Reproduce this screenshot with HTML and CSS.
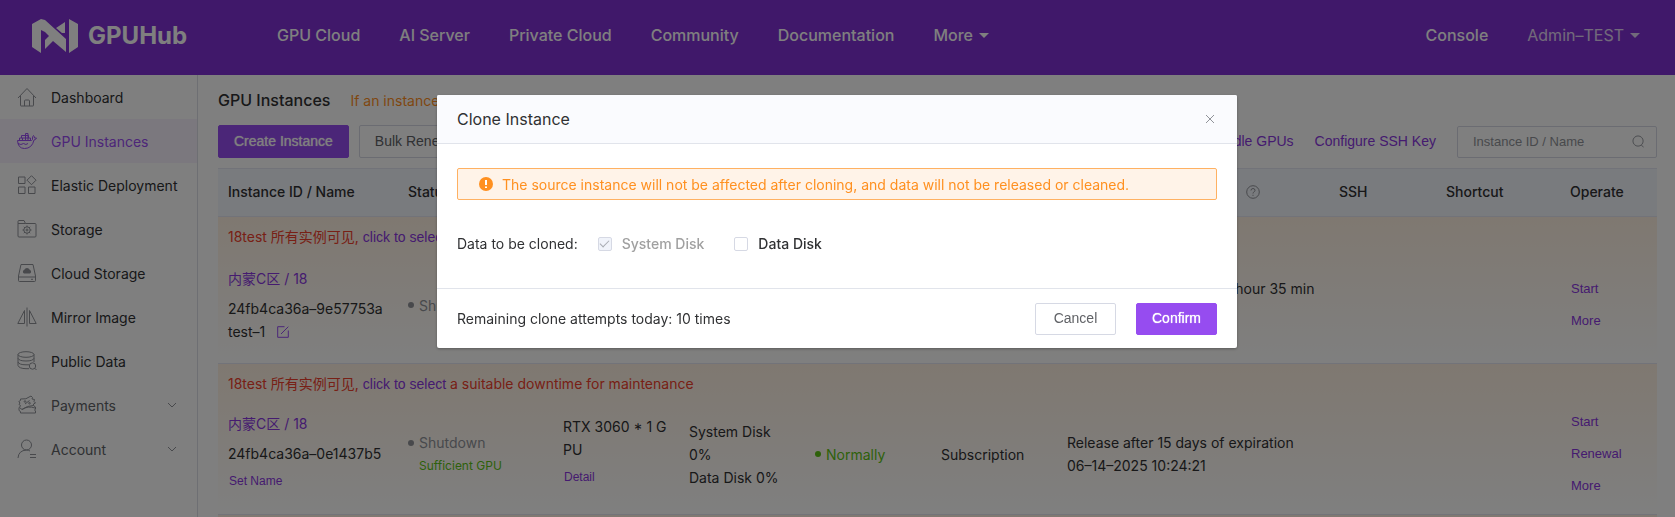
FILE: index.html
```html
<!DOCTYPE html>
<html lang="en">
<head>
<meta charset="utf-8">
<title>GPUHub - GPU Instances</title>
<link rel="stylesheet" href="styles.css">
</head>
<body>
<header class="topbar">
  <a class="logo" href="#">
    <svg class="logo-mark" viewBox="0 0 46 34" aria-hidden="true"><path d="M0 5 9 0 13 1 34 20V33L21 22 13 30V21L17 17 13 13 9 11V34L0 28ZM33 3V14L30 14 24 9ZM37 0 46 5V28L37 34Z"/></svg>
    <span>GPUHub</span>
  </a>
  <nav class="nav">
    <a href="#">GPU Cloud</a>
    <a href="#">AI Server</a>
    <a href="#">Private Cloud</a>
    <a href="#">Community</a>
    <a href="#">Documentation</a>
    <a href="#">More<i class="caret"></i></a>
  </nav>
  <div class="user">
    <a href="#">Console</a>
    <a class="account" href="#">Admin–TEST<i class="caret"></i></a>
  </div>
</header>

<div class="page">
  <aside class="sidebar">
    <a class="side-item" href="#">
      <svg class="side-icon" viewBox="0 0 20 20"><path d="M1 11 10 1.500 19 11M3.500 9V18.500Q3.500 19 4 19H16Q16.500 19 16.500 18.500V9M7.500 19V14Q7.500 13 8.500 13H11.500Q12.500 13 12.500 14V19"/></svg>
      <span>Dashboard</span></a>
    <a class="side-item active" href="#">
      <svg class="side-icon" viewBox="0 0 20 20"><path d="M.5 9.500H14.500Q16 9 15.500 7 15.500 5.500 16.500 4.500 17.500 5.500 17.500 7H19.500Q19 8.700 17 9 15 17.500 7.500 17.500 1 17.500 .5 9.500ZM2.500 9.500V7H13.500V9.500M4.500 7V4.500H11.500V7M8.500 4.500V2.500H11V7M5.500 7V9.500M8.500 4.500V9.500M11 7V9.500M1 12.500Q4 14.500 6.500 12.500 9 14.500 11 12.500"/></svg>
      <span>GPU Instances</span></a>
    <a class="side-item" href="#">
      <svg class="side-icon" viewBox="0 0 20 20"><path d="M1.500 2H8V8.500H1.500ZM1.500 12H8V18.500H1.500ZM11.500 12H18V18.500H11.500ZM14.500 .7 19 5.200 14.500 9.700 10 5.200Z"/></svg>
      <span>Elastic Deployment</span></a>
    <a class="side-item" href="#">
      <svg class="side-icon" viewBox="0 0 20 20"><path d="M1 4.500V2.500Q1 1.500 2 1.500H7L8.500 4.500H18Q19 4.500 19 5.500V17Q19 18 18 18H2Q1 18 1 17V4.500H8.500"/><circle cx="10" cy="11" r="3.200"/><circle cx="10" cy="11" r="1"/><path d="M10 6.500V8M10 14V15.500M5.500 11H7M13 11H14.500M6.800 7.800 7.900 8.900M12.100 13.100 13.200 14.200M6.800 14.200 7.900 13.100M12.100 8.900 13.200 7.800"/></svg>
      <span>Storage</span></a>
    <a class="side-item" href="#">
      <svg class="side-icon" viewBox="0 0 20 20"><path d="M4 1.500H16L18.500 13V17.500Q18.500 18.500 17.500 18.500H2.500Q1.500 18.500 1.500 17.500V13ZM1.500 14H18.500M14 16.300H16"/><path class="fill" d="M7 10.500A2 2 0 0 1 7.300 6.800 3 3 0 0 1 12.700 6.800 2 2 0 0 1 13 10.500Z"/></svg>
      <span>Cloud Storage</span></a>
    <a class="side-item" href="#">
      <svg class="side-icon" viewBox="0 0 20 20"><path d="M10 .5V19.500M7.500 3.500V16.500H.8ZM12.500 3.500V16.500H19.200Z"/></svg>
      <span>Mirror Image</span></a>
    <a class="side-item" href="#">
      <svg class="side-icon" viewBox="0 0 20 20"><ellipse cx="9" cy="3.500" rx="8" ry="2.800"/><path d="M1 3.500V14.500Q2 17.500 9 17.700H12M17 3.500V11M1 7.300Q2 10 9 10 16 10 17 7.300M1 11Q2 13.800 9 13.800H12"/><circle cx="15.500" cy="15" r="3.200"/><path d="M17.800 17.300 19.500 19"/></svg>
      <span>Public Data</span></a>
    <a class="side-item group" href="#">
      <svg class="side-icon" viewBox="0 0 20 20"><path d="M3.500 10.500 2 9.500 3 8 1.800 6.500 3.500 5.500 3.500 4Q9 5 14 1L15.500 2.500 15 4 17.500 4.500 17 6.500 18.500 8 16.500 9V10.500Q10 10.500 5 14.500L2.500 12.500ZM16.500 10.500 18.500 12V14L17.500 15 18.500 16V18H3.500V16.500L2 15.500V12.500M5 14.500Q11 10.500 18 13M8 9 12.500 5.500"/><circle cx="8" cy="6.500" r=".8"/><circle cx="12.500" cy="8.200" r=".8"/></svg>
      <span>Payments</span>
      <svg class="chev" viewBox="0 0 10 6"><path d="M1 1 5 5 9 1"/></svg></a>
    <a class="side-item group" href="#">
      <svg class="side-icon" viewBox="0 0 20 20"><circle cx="9.500" cy="6" r="5"/><path d="M1 19Q1.500 11.500 9.500 11Q11.500 11 13 12M13 15.500H19M13 18.500H19"/></svg>
      <span>Account</span>
      <svg class="chev" viewBox="0 0 10 6"><path d="M1 1 5 5 9 1"/></svg></a>
  </aside>

  <main class="main">
    <div class="heading">
      <h1>GPU Instances</h1>
      <p>If an instance is shut down</p>
    </div>
    <div class="toolbar">
      <button class="btn primary">Create Instance</button>
      <button class="btn">Bulk Renewal</button>
      <div class="tools">
        <a href="#">Subscribe Idle GPUs</a>
        <a href="#">Configure SSH Key</a>
        <label class="search">
          <input type="text" placeholder="Instance ID / Name" aria-label="Instance ID / Name">
          <svg viewBox="0 0 14 14"><circle cx="6.500" cy="6.500" r="5.500"/><path d="M10 11 12.500 13"/></svg>
        </label>
      </div>
    </div>

    <table class="grid">
      <colgroup>
        <col class="c-id"><col class="c-status"><col class="c-std"><col class="c-std"><col class="c-std"><col class="c-std"><col><col class="c-ssh"><col class="c-cut"><col class="c-op">
      </colgroup>
      <thead>
        <tr><th>Instance ID / Name</th><th>Status</th><th>Specification</th><th>Local Disk</th><th>Health</th><th>Billing</th><th><span class="with-help">Release Time / Stop Time <svg class="help" viewBox="0 0 14 14"><circle cx="7" cy="7" r="6.300"/><path d="M5 5.500Q5 3.500 7 3.500T9 5.400Q9 6.300 8 6.900 7 7.500 7 8.500M7 9.800V10.900"/></svg></span></th><th>SSH</th><th>Shortcut</th><th>Operate</th></tr>
      </thead>
      <tbody>
        <tr class="notice"><td colspan="10">18test 所有实例可见, <a href="#">click to select</a> a suitable downtime for maintenance</td></tr>
        <tr>
          <td><div class="region">内蒙C区 / 18</div><div>24fb4ca36a–9e57753a</div><div class="named">test–1 <svg class="edit" viewBox="0 0 12 12"><path d="M7.500 .7H.7V11.300H11.300V4.500M4 8 11.300 .7"/></svg></div></td>
          <td><div class="state off">Shutdown</div></td>
          <td><div>RTX 3060 * 1 GPU</div><a class="mini" href="#">Detail</a></td>
          <td><div>System Disk 0%</div><div>Data Disk<br>0%</div></td>
          <td><div class="state ok">Normally</div></td>
          <td>Pay as you go</td>
          <td class="upper"><div>Release after 20 days 23 hour 35 min</div><div>if shut down</div></td>
          <td></td><td></td>
          <td><a class="mini op" href="#">Start</a><a class="mini op" href="#">More</a></td>
        </tr>
      </tbody>
      <tbody>
        <tr class="notice"><td colspan="10">18test 所有实例可见, <a href="#">click to select</a> a suitable downtime for maintenance</td></tr>
        <tr>
          <td><div class="region">内蒙C区 / 18</div><div>24fb4ca36a–0e1437b5</div><a class="mini" href="#">Set Name</a></td>
          <td><div class="state off">Shutdown</div><div class="stock">Sufficient GPU</div></td>
          <td><div class="spec">RTX 3060 * 1 GPU</div><a class="mini" href="#">Detail</a></td>
          <td><div>System Disk 0%</div><div>Data Disk 0%</div></td>
          <td><div class="state ok">Normally</div></td>
          <td>Subscription</td>
          <td><div>Release after 15 days of expiration</div><div>06–14–2025 10:24:21</div></td>
          <td></td><td></td>
          <td><a class="mini op" href="#">Start</a><a class="mini op" href="#">Renewal</a><a class="mini op" href="#">More</a></td>
        </tr>
      </tbody>
      <tbody>
        <tr class="notice"><td colspan="10"></td></tr>
      </tbody>
    </table>
  </main>
</div>

<div class="overlay">
  <section class="dialog" role="dialog" aria-labelledby="dlg-title">
    <header class="dialog-head">
      <h2 id="dlg-title">Clone Instance</h2>
      <button class="close" aria-label="Close"><svg viewBox="0 0 10 10"><path d="M1 1 9 9M9 1 1 9"/></svg></button>
    </header>
    <div class="dialog-body">
      <div class="alert">
        <svg viewBox="0 0 14 14"><circle cx="7" cy="7" r="7"/><path d="M7 3V8M7 9.500V11"/></svg>
        <span>The source instance will not be affected after cloning, and data will not be released or cleaned.</span>
      </div>
      <div class="form-row">
        <span class="form-label">Data to be cloned:</span>
        <label class="check disabled"><input type="checkbox" checked disabled>System Disk</label>
        <label class="check"><input type="checkbox">Data Disk</label>
      </div>
    </div>
    <footer class="dialog-foot">
      <span>Remaining clone attempts today: 10 times</span>
      <div class="actions">
        <button class="btn">Cancel</button>
        <button class="btn primary">Confirm</button>
      </div>
    </footer>
  </section>
</div>
</body>
</html>
```
FILE: styles.css
```css
* { box-sizing: border-box; }
html, body { height: 100%; }
body {
  margin: 0;
  overflow: hidden;
  display: flex;
  flex-direction: column;
  background: #fff;
  color: #303133;
  font: 14px/23px Inter, "Noto Sans CJK SC", sans-serif;
}
a { color: #8a36e0; text-decoration: none; }
svg { fill: none; stroke: currentColor; flex: none; }
button, input { font: inherit; }

.topbar {
  flex: none;
  height: 75px;
  padding: 0 35px 4px 32px;
  display: flex;
  align-items: center;
  background: #8031d4;
}
.topbar a { color: #fff; font-size: 16px; font-weight: 500; }
.topbar .logo { width: 245px; display: flex; align-items: center; gap: 10px; font-size: 24px; font-weight: 700; }
.logo-mark { width: 46px; height: 34px; fill: #fff; stroke: none; }
.nav { display: flex; gap: 39px; }
.nav a, .user a { display: flex; align-items: center; gap: 6px; white-space: nowrap; }
.user { margin-left: auto; display: flex; gap: 39px; }
.topbar .account { font-weight: 400; opacity: .8; }
.caret { border: 5px solid transparent; border-top-color: currentColor; border-bottom: 0; }

.page { flex: 1; min-height: 0; display: flex; overflow: hidden; }
.sidebar { flex: none; width: 198px; border-right: 1px solid #dcdfe6; }
.side-item { height: 44px; padding: 0 20px 0 17px; display: flex; align-items: center; gap: 14px; color: #303133; white-space: nowrap; }
.side-item.active { color: #9a4df2; background: #f7f1fd; }
.side-item.group { color: #606266; }
.side-icon { width: 20px; height: 20px; color: #909399; }
.active .side-icon { color: inherit; }
.side-icon .fill { fill: currentColor; stroke: none; }
.chev { width: 10px; height: 6px; margin-left: auto; color: #909399; }

.main { flex: 1; min-width: 0; padding: 13px 18px 0 20px; }
.heading { display: flex; align-items: center; gap: 20px; height: 24px; }
.heading h1 { margin: 0; font-size: 16px; font-weight: 500; }
.heading p { margin: 0; color: #ff8f1f; }
.toolbar { display: flex; align-items: center; gap: 10px; margin-top: 13px; }
.btn, .tools, .mini, .notice a { font-family: "Liberation Sans", Arial, sans-serif; }
.btn {
  height: 33px;
  padding: 0 15px;
  border: 1px solid #d6d9e4;
  border-radius: 2px;
  background: #fff;
  color: #606266;
}
.btn.primary { border-color: #964cf0; background: #964cf0; color: #fff; text-shadow: 0 0 1px #fff; }
.tools { margin-left: auto; display: flex; align-items: center; gap: 21px; }
.search { width: 200px; height: 32px; padding: 0 11px 0 15px; display: flex; align-items: center; border: 1px solid #d6d9e4; border-radius: 2px; }
.search input { flex: 1; min-width: 0; padding: 0; border: 0; outline: 0; background: none; font-size: 13px; }
.search input::placeholder { color: #909399; }
.search svg { width: 13px; height: 13px; color: #909399; }

.grid { width: 100%; margin-top: 10px; table-layout: fixed; border-collapse: separate; border-spacing: 0; }
.c-id { width: 180px; }
.c-status { width: 155px; }
.c-std { width: 126px; }
.c-ssh { width: 107px; }
.c-cut { width: 124px; }
.c-op { width: 97px; }
.grid th { height: 49px; padding: 0 10px 2px; text-align: left; font-weight: 500; white-space: nowrap; background: #f3f6fc; border: solid #e4e7f2; border-width: 1px 0; }
.with-help { display: flex; align-items: center; gap: 9px; }
.help { width: 14px; height: 14px; color: #909399; }
.grid tbody { background: linear-gradient(#fff1e2, #fff); }
.grid td { padding: 12px 10px; border-bottom: 1px solid #e4e7f2; }
.grid .notice td { height: 30px; padding: 9px 10px 0; border: 0; line-height: 21px; color: #f0402c; }
.notice a { line-height: 16px; }
.grid td.upper { vertical-align: top; padding-top: 30px; }
.region { height: 23px; margin-bottom: 7px; color: #8a36e0; }
.named { display: flex; align-items: center; gap: 12px; }
.edit { width: 12px; height: 12px; color: #964cf0; }
.mini { display: block; padding-left: 1px; font-size: 12px; line-height: 32px; }
.mini.op { font-size: 13px; }
.spec { word-break: break-all; }
.state { display: flex; align-items: center; gap: 5px; }
.state::before { content: ""; width: 6px; height: 6px; border-radius: 50%; background: currentColor; }
.off { color: #909399; }
.ok, .stock { color: #5cc314; }
.stock { padding-left: 11px; font-size: 12px; }

.overlay { position: fixed; inset: 0; padding: 95px 21px 20px 20px; background: rgba(0, 0, 0, .5); }
.dialog { max-width: 800px; margin: 0 auto; border-radius: 2px; background: #fff; box-shadow: 0 1px 3px rgba(0, 0, 0, .3); }
.dialog-head { height: 49px; padding: 0 22px 0 20px; display: flex; align-items: center; justify-content: space-between; border-bottom: 1px solid #e1e4eb; background: #fafbfe; border-radius: 2px 2px 0 0; }
.dialog-head h2 { margin: 0; font-size: 16px; font-weight: 400; }
.close { padding: 0; border: 0; background: none; color: #909399; display: flex; }
.close svg { width: 10px; height: 10px; }
.dialog-body { padding: 24px 20px 33px; }
.alert { height: 32px; padding: 0 21px; display: flex; align-items: center; gap: 9px; border: 1px solid #ffb162; border-radius: 2px; background: #fff3e8; color: #ff9020; }
.alert svg { width: 14px; height: 14px; fill: #ff9020; stroke: none; }
.alert svg path { stroke: #fff; stroke-width: 2; }
.form-row { margin-top: 32px; display: flex; align-items: center; }
.form-label { margin-right: 20px; }
.check { display: flex; align-items: center; gap: 10px; margin-right: 30px; font-weight: 500; }
.check input { appearance: none; width: 14px; height: 14px; margin: 0; border: 1px solid #d6d9e4; border-radius: 2px; background: #fff; display: grid; place-items: center; }
.check input:checked::after { content: ""; width: 4px; height: 8px; margin-bottom: 2px; border: solid #a8abb2; border-width: 0 1px 1px 0; transform: rotate(45deg); }
.check.disabled { color: #a0a0a0; }
.check.disabled input { background: #f0f3fa; }
.dialog-foot { height: 60px; padding: 0 20px; display: flex; align-items: center; justify-content: space-between; border-top: 1px solid #e1e4eb; }
.actions { display: flex; gap: 20px; }
.actions .btn { height: 32px; min-width: 81px; }
```
